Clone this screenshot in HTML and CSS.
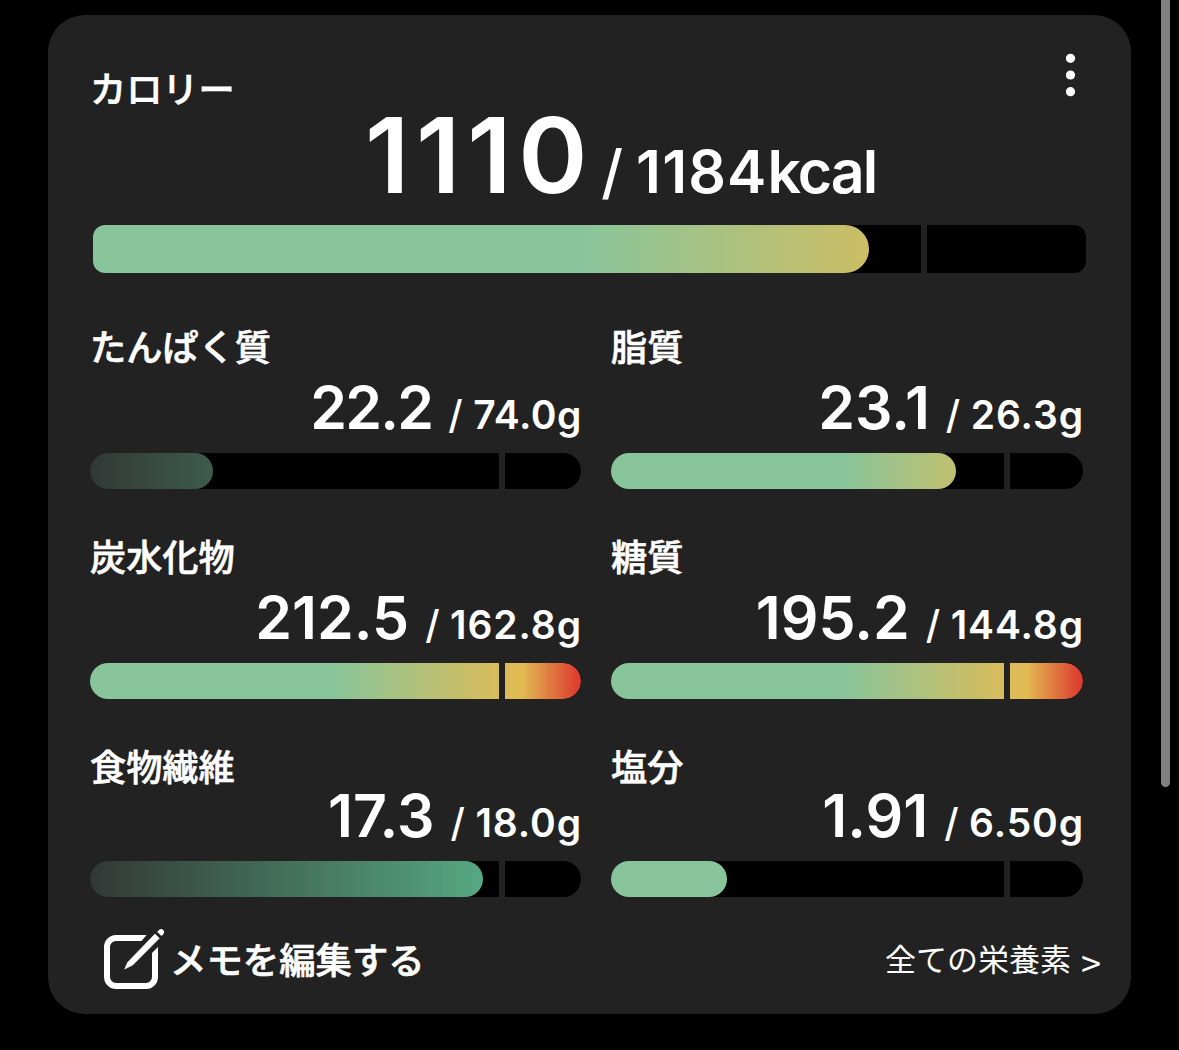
FILE: index.html
```html
<!DOCTYPE html>
<html lang="ja">
<head>
  <meta charset="UTF-8">
  <meta name="viewport" content="width=device-width, initial-scale=1.0">
  <title>カロリー</title>
  <link rel="stylesheet" href="styles.css">
</head>
<body>
  <main class="card">
    <header class="card-header">
      <h2 class="label">カロリー</h2>
      <svg class="menu" width="10" height="44" viewBox="0 0 10 44" fill="#fff">
        <circle cx="4.500" cy="5.3" r="4.6"/>
        <circle cx="4.500" cy="22" r="4.6"/>
        <circle cx="4.500" cy="38.7" r="4.6"/>
      </svg>
    </header>
    <div class="total">
      <span class="total-value">1110</span>
      <span class="total-slash">/</span>
      <span class="total-goal">1184<span class="unit">kcal</span></span>
    </div>
    <div class="bar bar-total">
      <div class="fill" style="width: 776px"></div>
      <div class="marker"></div>
    </div>

    <div class="nutrients">
      <section class="nutrient">
        <h3 class="label">たんぱく質</h3>
        <div class="amount tight"><span class="value">22.2</span><span class="slash">/</span><span class="goal">74.0g</span></div>
        <div class="bar">
          <div class="fill fill-dark" style="width: 123px"></div>
          <div class="marker"></div>
        </div>
      </section>
      <section class="nutrient">
        <h3 class="label">脂質</h3>
        <div class="amount"><span class="value">23.1</span><span class="slash">/</span><span class="goal">26.3g</span></div>
        <div class="bar">
          <div class="fill" style="width: 345px"></div>
          <div class="marker"></div>
        </div>
      </section>
      <section class="nutrient">
        <h3 class="label">炭水化物</h3>
        <div class="amount"><span class="value">212.5</span><span class="slash">/</span><span class="goal">162.8g</span></div>
        <div class="bar">
          <div class="fill" style="width: 100%"></div>
          <div class="marker"></div>
        </div>
      </section>
      <section class="nutrient">
        <h3 class="label">糖質</h3>
        <div class="amount"><span class="value">195.2</span><span class="slash">/</span><span class="goal">144.8g</span></div>
        <div class="bar">
          <div class="fill" style="width: 100%"></div>
          <div class="marker"></div>
        </div>
      </section>
      <section class="nutrient compact">
        <h3 class="label">食物繊維</h3>
        <div class="amount"><span class="value">17.3</span><span class="slash">/</span><span class="goal">18.0g</span></div>
        <div class="bar">
          <div class="fill fill-dark" style="width: 393px"></div>
          <div class="marker"></div>
        </div>
      </section>
      <section class="nutrient compact">
        <h3 class="label">塩分</h3>
        <div class="amount"><span class="value">1.91</span><span class="slash">/</span><span class="goal">6.50g</span></div>
        <div class="bar">
          <div class="fill" style="width: 116px"></div>
          <div class="marker"></div>
        </div>
      </section>
    </div>

    <footer class="card-footer">
      <div class="memo">
        <svg class="memo-icon" width="62" height="62" viewBox="0 0 62 62">
          <rect x="4" y="10" width="48" height="48" rx="9" fill="none" stroke="#fff" stroke-width="6"/>
          <path d="M44.500 6L38 13.500L48 26L57 17L56 6Z" fill="#222"/>
          <path d="M52 6L56.300 10.300L29.700 37L21.700 41L24.700 34.300Z" fill="#fff" stroke="#fff" stroke-width=".6" stroke-linejoin="round"/>
          <path d="M54.200 3.900L56.300 1.800Q58.400 .2 60.300 2.100Q62 4.200 60.500 6L58.500 8.100Z" fill="#fff"/>
        </svg>
        <span class="memo-text">メモを編集する</span>
      </div>
      <div class="more"><span>全ての栄養素</span><span class="arrow">&gt;</span></div>
    </footer>
  </main>
  <div class="scrollbar"></div>
</body>
</html>
```
FILE: styles.css
```css
* {
  box-sizing: border-box;
}
body {
  margin: 0;
  height: 1050px;
  padding: 15px 48px;
  overflow: hidden;
  background: #000;
  color: #fff;
  font-family: Inter, "Noto Sans CJK JP", sans-serif;
}
.card {
  height: 999px;
  padding: 38px 45px 0 42px;
  background: #222;
  border-radius: 37px;
}
.card-header {
  display: flex;
  justify-content: space-between;
  align-items: flex-start;
  height: 56px;
  padding-right: 10px;
}
.label {
  margin: 0;
  height: 40px;
  font-family: "Noto Sans CJK JP", sans-serif;
  font-size: 36.2px;
  font-weight: 500;
  line-height: 36px;
  -webkit-text-stroke: 0.6px #fff;
}
.card-header .label {
  margin-top: 16px;
}
.total {
  display: flex;
  align-items: baseline;
  height: 100px;
  margin-top: -4px;
  padding-left: 275px;
  line-height: 100px;
  font-weight: 600;
}
.total-value {
  font-size: 105px;
  letter-spacing: 6.7px;
}
.total-slash {
  margin-left: 7px;
  font-size: 59px;
  font-weight: 500;
}
.total-goal {
  margin-left: 13px;
  font-size: 59px;
  letter-spacing: 1.1px;
}
.unit {
  letter-spacing: -1.9px;
}
.bar {
  --track: 491px;
  display: flex;
  position: relative;
  height: 36px;
  background: #000;
  border-radius: 18px;
  overflow: hidden;
}
.fill {
  background-image: linear-gradient(to right, #88c59b 49%, #e3bb53 88%, #dd4030 99%);
  background-size: var(--track) 100%;
  border-radius: 0 18px 18px 0;
}
.fill-dark {
  background-image: linear-gradient(to right, #323835, #57ac85 83%);
}
.marker {
  position: absolute;
  top: 0;
  left: 83.3%;
  width: 6px;
  height: 100%;
  background: #222;
}
.bar-total {
  --track: 993px;
  width: 993px;
  height: 48px;
  margin: 20px 0 54px 3px;
  border-radius: 12px;
}
.bar-total .fill {
  border-radius: 0 24px 24px 0;
}
.bar-total .marker {
  left: 828px;
}
.nutrients {
  display: grid;
  grid-template-columns: 491px 472px;
  gap: 48px 30px;
}
.nutrient:nth-child(even) .bar {
  --track: 472px;
}
.amount {
  display: flex;
  justify-content: flex-end;
  align-items: baseline;
  height: 60px;
  margin: 11px 0 15px;
  line-height: 60px;
  font-weight: 600;
}
.compact .amount {
  margin-top: -1px;
}
.value {
  font-size: 59px;
}
.slash {
  margin-left: 16px;
  font-size: 39px;
  font-weight: 500;
}
.goal {
  margin: 0 -1px 0 10.5px;
  font-size: 39px;
  letter-spacing: 0.9px;
}
.tight .value {
  letter-spacing: -1.8px;
}
.tight .goal {
  letter-spacing: 0.5px;
}
.card-footer {
  display: flex;
  justify-content: space-between;
  align-items: center;
  width: 1011px;
  height: 62px;
  margin-top: 31px;
  padding-left: 13px;
  font-family: "Noto Sans CJK JP", sans-serif;
}
.memo {
  display: flex;
  align-items: center;
}
.memo-text {
  margin-left: 5px;
  padding-bottom: 2px;
  font-size: 36.4px;
  font-weight: 500;
  line-height: 40px;
  -webkit-text-stroke: 0.6px #fff;
}
.more {
  display: flex;
  font-size: 31px;
  line-height: 40px;
}
.arrow {
  margin-left: 10px;
  padding-top: 3px;
  font-size: 36px;
}
.scrollbar {
  position: fixed;
  top: -10px;
  left: 1161px;
  width: 9px;
  height: 797px;
  background: #808080;
  border-radius: 5px;
}
```
